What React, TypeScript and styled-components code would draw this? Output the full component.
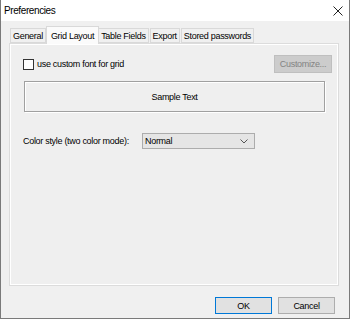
import styled, { createGlobalStyle } from "styled-components";

const Global = createGlobalStyle`
  html, body {
    margin: 0;
    padding: 0;
    background: #f0f0f0;
  }
  * {
    box-sizing: border-box;
  }
`;

const Window = styled.div`
  width: 350px;
  height: 319px;
  display: flex;
  flex-direction: column;
  background: #f0f0f0;
  border: 1px solid #7a7a7a;
  border-top: none;
  font-family: "Liberation Sans", Arial, sans-serif;
  font-size: 9px;
  letter-spacing: -0.3px;
  color: #000;
`;

const TitleBar = styled.div`
  height: 21px;
  flex: none;
  background: #fff;
  display: flex;
  align-items: center;
  justify-content: space-between;
  padding: 0 6px 0 3px;
  font-size: 10px;
  letter-spacing: -0.4px;

  svg {
    display: block;
  }
`;

const Body = styled.div`
  flex: 1;
  display: flex;
  flex-direction: column;
  padding: 5px 10px 0 8px;
`;

const TabStrip = styled.div`
  display: flex;
  align-items: flex-end;
  height: 17px;
  padding-left: 1px;
  position: relative;
  z-index: 1;
`;

const Tab = styled.div<{ $active?: boolean }>`
  height: ${(p) => (p.$active ? "18px" : "15px")};
  padding: ${(p) => (p.$active ? "0 4px" : "0 2px")};
  margin: ${(p) => (p.$active ? "0 -1px -1px" : "0 1px 0 0")};
  background: ${(p) => (p.$active ? "#fbfbfb" : "#f0f0f0")};
  border: 1px solid #d9d9d9;
  border-bottom: ${(p) => (p.$active ? "none" : "1px solid #d9d9d9")};
  display: flex;
  align-items: center;
  white-space: nowrap;
  position: relative;
  z-index: ${(p) => (p.$active ? 2 : 1)};
`;

const Panel = styled.div`
  width: 330px;
  height: 243px;
  border: 1px solid #dcdcdc;
  box-shadow: inset 1px 1px 0 #fff, inset -1px -1px 0 #fff;
  background: #efefef;
  display: flex;
  flex-direction: column;
  padding: 11px 6px 0 13px;
`;

const Row = styled.div`
  display: flex;
  align-items: center;
  justify-content: space-between;
`;

const CheckLabel = styled.label`
  display: flex;
  align-items: center;
  gap: 3px;
`;

const CheckBox = styled.span`
  width: 11px;
  height: 11px;
  border: 1px solid #333;
  background: #fff;
  display: inline-block;
`;

const Button = styled.div<{ $disabled?: boolean; $default?: boolean }>`
  width: ${(p) => (p.$disabled ? "58px" : "57px")};
  height: ${(p) => (p.$disabled ? "18px" : "17px")};
  display: flex;
  align-items: center;
  justify-content: center;
  background: ${(p) => (p.$disabled ? "#cccccc" : "#e1e1e1")};
  color: ${(p) => (p.$disabled ? "#838383" : "#000")};
  border: 1px solid
    ${(p) => (p.$disabled ? "#bfbfbf" : p.$default ? "#0078d7" : "#adadad")};
`;

const SampleBox = styled.div`
  width: 301px;
  height: 31px;
  margin: 8px 0 0 1px;
  border: 1px solid #a0a0a0;
  box-shadow: 1px 1px 0 #fff, inset 1px 1px 0 #fff;
  display: flex;
  align-items: center;
  justify-content: center;
`;

const StyleRow = styled.div`
  display: grid;
  grid-template-columns: 119px 113px;
  align-items: center;
  margin-top: 21px;
`;

const Select = styled.div`
  height: 16px;
  background: #e5e5e5;
  border: 1px solid #acacac;
  display: flex;
  align-items: center;
  justify-content: space-between;
  padding: 0 6px 0 2px;
`;

const Footer = styled.div`
  display: flex;
  justify-content: flex-end;
  gap: 6px;
  margin-top: 11px;
  padding-right: 4px;
`;

export default function App() {
  return (
    <>
      <Global />
      <Window>
        <TitleBar>
          <span>Preferencies</span>
          <svg width="10" height="10" viewBox="0 0 10 10">
            <path d="M0.5 0.5 L9.5 9.5 M9.5 0.5 L0.5 9.5" stroke="#222" strokeWidth="1" />
          </svg>
        </TitleBar>
        <Body>
          <TabStrip>
            <Tab>General</Tab>
            <Tab $active>Grid Layout</Tab>
            <Tab>Table Fields</Tab>
            <Tab>Export</Tab>
            <Tab>Stored passwords</Tab>
          </TabStrip>
          <Panel>
            <Row>
              <CheckLabel>
                <CheckBox />
                use custom font for grid
              </CheckLabel>
              <Button $disabled>Customize...</Button>
            </Row>
            <SampleBox>Sample Text</SampleBox>
            <StyleRow>
              <span>Color style (two color mode):</span>
              <Select>
                <span>Normal</span>
                <svg width="8" height="5" viewBox="0 0 8 5">
                  <path d="M0.5 0.5 L4 4 L7.5 0.5" stroke="#555" fill="none" />
                </svg>
              </Select>
            </StyleRow>
          </Panel>
          <Footer>
            <Button $default>OK</Button>
            <Button>Cancel</Button>
          </Footer>
        </Body>
      </Window>
    </>
  );
}
